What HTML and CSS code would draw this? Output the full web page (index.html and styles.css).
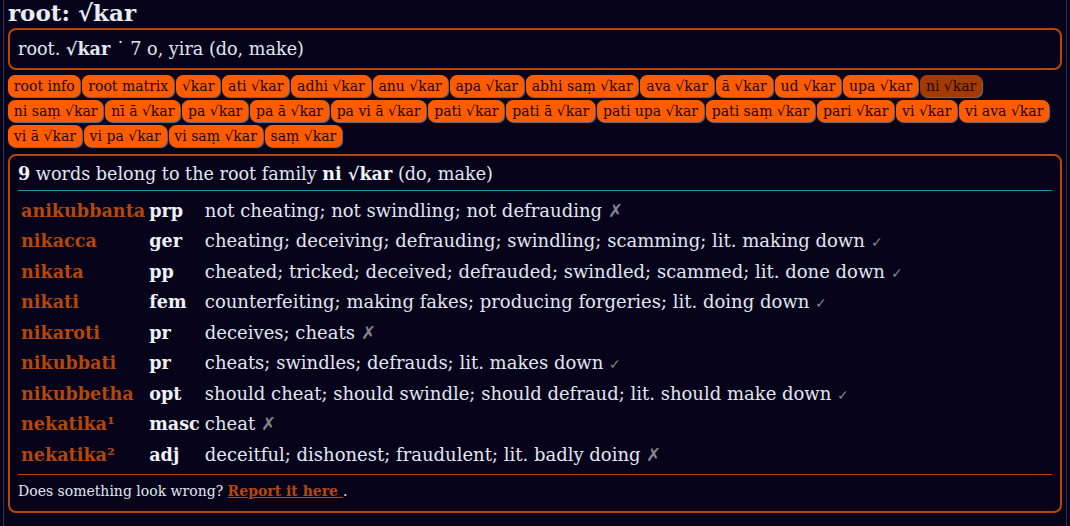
FILE: index.html
```html
<!DOCTYPE html>
<html>
<head>
<meta charset="utf-8">
<link rel="stylesheet" href="styles.css">
</head>
<body>
<div class="page">
  <h1 class="title">root: √kar</h1>
  <div class="box summary">root. <b>√kar</b> ˙ 7 o, yira (do, make)</div>
  <div class="buttons">
    <span class="btn">root info</span>
    <span class="btn">root matrix</span>
    <span class="btn">√kar</span>
    <span class="btn">ati √kar</span>
    <span class="btn">adhi √kar</span>
    <span class="btn">anu √kar</span>
    <span class="btn">apa √kar</span>
    <span class="btn">abhi saṃ √kar</span>
    <span class="btn">ava √kar</span>
    <span class="btn">ā √kar</span>
    <span class="btn">ud √kar</span>
    <span class="btn">upa √kar</span>
    <span class="btn active">ni √kar</span>
    <span class="btn">ni saṃ √kar</span>
    <span class="btn">nī ā √kar</span>
    <span class="btn">pa √kar</span>
    <span class="btn">pa ā √kar</span>
    <span class="btn">pa vi ā √kar</span>
    <span class="btn">pati √kar</span>
    <span class="btn">pati ā √kar</span>
    <span class="btn">pati upa √kar</span>
    <span class="btn">pati saṃ √kar</span>
    <span class="btn">pari √kar</span>
    <span class="btn">vi √kar</span>
    <span class="btn">vi ava √kar</span>
    <span class="btn">vi ā √kar</span>
    <span class="btn">vi pa √kar</span>
    <span class="btn">vi saṃ √kar</span>
    <span class="btn">saṃ √kar</span>
  </div>
  <div class="box family">
    <div class="family-head"><b>9</b> words belong to the root family <b>ni √kar</b> (do, make)</div>
    <table class="words">
      <tr><td class="w">anikubbanta</td><td class="pos">prp</td><td>not cheating; not swindling; not defrauding <span class="mark x">✗</span></td></tr>
      <tr><td class="w">nikacca</td><td class="pos">ger</td><td>cheating; deceiving; defrauding; swindling; scamming; lit. making down <span class="mark ok">✓</span></td></tr>
      <tr><td class="w">nikata</td><td class="pos">pp</td><td>cheated; tricked; deceived; defrauded; swindled; scammed; lit. done down <span class="mark ok">✓</span></td></tr>
      <tr><td class="w">nikati</td><td class="pos">fem</td><td>counterfeiting; making fakes; producing forgeries; lit. doing down <span class="mark ok">✓</span></td></tr>
      <tr><td class="w">nikaroti</td><td class="pos">pr</td><td>deceives; cheats <span class="mark x">✗</span></td></tr>
      <tr><td class="w">nikubbati</td><td class="pos">pr</td><td>cheats; swindles; defrauds; lit. makes down <span class="mark ok">✓</span></td></tr>
      <tr><td class="w">nikubbetha</td><td class="pos">opt</td><td>should cheat; should swindle; should defraud; lit. should make down <span class="mark ok">✓</span></td></tr>
      <tr><td class="w">nekatika¹</td><td class="pos">masc</td><td>cheat <span class="mark x">✗</span></td></tr>
      <tr><td class="w">nekatika²</td><td class="pos">adj</td><td>deceitful; dishonest; fraudulent; lit. badly doing <span class="mark x">✗</span></td></tr>
    </table>
    <div class="footer">Does something look wrong? <a class="report" href="#">Report it here </a>.</div>
  </div>
</div>
</body>
</html>
```

FILE: styles.css
```css
html {
  background: #06031a;
}
body {
  margin: 0 3px;
  min-height: 526px;
  border-left: 1px solid #34344a;
  border-right: 1px solid #34344a;
  box-sizing: border-box;
  font-family: "DejaVu Serif", serif;
  color: #e1e6f1;
}
.page {
  padding: 0 4px;
}
.title {
  margin: 0 0 2px 0;
  font-size: 23px;
  line-height: 26px;
  font-weight: bold;
  color: #e6ebf4;
}
.box {
  border: 2px solid #b5470b;
  border-radius: 8px;
}
.summary {
  padding: 8px 8px;
  font-size: 17.6px;
  line-height: 21px;
}
.buttons {
  display: flex;
  flex-wrap: wrap;
  gap: 3px 2px;
  margin-top: 5px;
}
.btn {
  display: inline-block;
  background: #ff5c00;
  color: #1a0800;
  font-size: 14px;
  line-height: 21px;
  padding: 0 5.85px;
  border-radius: 7px;
  box-shadow: 1px 1px 1px #6f7080;
  border-top: 1px solid #ff5c00;
}
.btn.active {
  background: #a33a00;
  border-top-color: #a33a00;
}
.family {
  margin-top: 7px;
  padding: 0 8px;
}
.family-head {
  font-size: 17.6px;
  line-height: 20.5px;
  padding: 8px 0 5.5px 0;
  border-bottom: 1px solid #1b93c4;
}
.family-head b {
  color: #f0f3f8;
}
.words {
  border-collapse: collapse;
  margin-top: 3.8px;
  font-size: 18px;
  line-height: 21px;
}
.words td {
  padding: 4.75px 0 4.75px 0;
  white-space: nowrap;
}
.words td.w {
  color: #b5470b;
  font-weight: bold;
  font-size: 17.6px;
  padding-left: 3px;
  padding-right: 4px;
}
.words td.pos {
  font-weight: bold;
  font-size: 17.6px;
  color: #eef1f7;
  padding-right: 5px;
}
.mark {
  color: #84848c;
  line-height: 1px;
}
.mark.ok {
  font-size: 14px;
}
.footer {
  margin-top: 4.5px;
  border-top: 1px solid #b5470b;
  padding: 8px 0 11px 0;
  font-size: 14px;
  line-height: 17px;
}
.report {
  color: #b5470b;
  font-weight: bold;
}
```
